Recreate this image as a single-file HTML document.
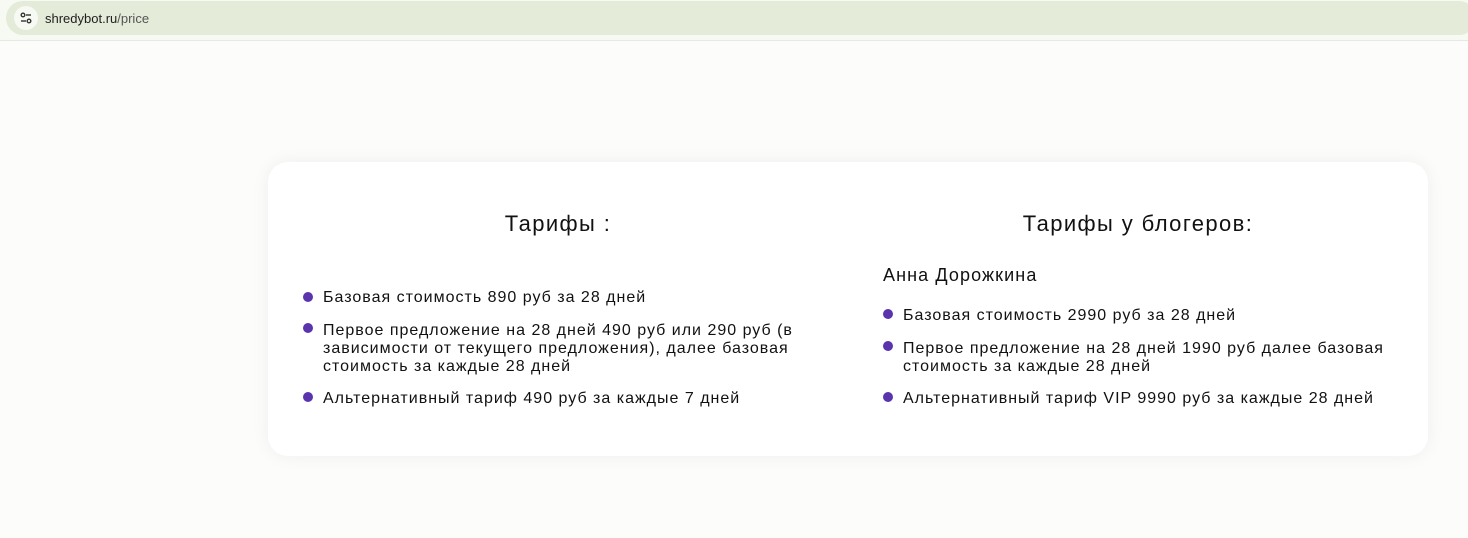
<!DOCTYPE html>
<html><head><meta charset="utf-8"><style>
*{margin:0;padding:0;box-sizing:border-box}
body{width:1468px;height:538px;background:#fcfdfb;font-family:"Liberation Sans",sans-serif;color:#111;position:relative;overflow:hidden}
.bar{position:absolute;left:0;top:0;width:1468px;height:41px;background:#f7f9f3;border-bottom:1px solid #e6e9e1}
.url{position:absolute;left:6px;top:1px;width:1470px;height:34px;border-radius:17px;background:#e4ebd9}
.ic{position:absolute;left:14px;top:6px;width:24px;height:24px;border-radius:12px;background:#f7f9f3}
.ut{position:absolute;left:45px;top:11px;font-size:13px;color:#1f1f1f}
.ut span{color:#555}
.card{position:absolute;left:268px;top:162px;width:1160px;height:294px;background:#fff;border-radius:20px;box-shadow:0 0 18px rgba(0,0,0,.06)}
.h{position:absolute;font-size:22px;text-align:center;width:580px;top:211px;letter-spacing:1.4px}
.t{position:absolute;font-size:16px;line-height:18px;letter-spacing:1px}
.b{position:absolute;width:10px;height:10px;border-radius:5px;background:#5a34ad}
</style></head><body>
<div class="bar"><div class="url"></div>
<div class="ic"><svg width="24" height="24" viewBox="0 0 24 24" fill="none" stroke="#333" stroke-width="1.4"><circle cx="9" cy="9" r="1.8"/><line x1="12" y1="9" x2="17" y2="9"/><line x1="7" y1="15" x2="12" y2="15"/><circle cx="15" cy="15" r="1.8"/></svg></div>
<div class="ut">shredybot.ru<span>/price</span></div></div>
<div class="card"></div>
<div class="h" style="left:268px">Тарифы :</div>
<div class="h" style="left:848px">Тарифы у блогеров:</div>
<div class="b" style="left:303px;top:292px"></div><div class="t" style="left:323px;top:289px">Базовая стоимость 890 руб за 28 дней</div>
<div class="b" style="left:303px;top:323px"></div><div class="t" style="left:323px;top:322px;width:530px">Первое предложение на 28 дней 490 руб или 290 руб (в зависимости от текущего предложения), далее базовая стоимость за каждые 28 дней</div>
<div class="b" style="left:303px;top:392px"></div><div class="t" style="left:323px;top:390px">Альтернативный тариф 490 руб за каждые 7 дней</div>
<div class="t" style="left:883px;top:266px;font-size:18px;letter-spacing:1.1px">Анна Дорожкина</div>
<div class="b" style="left:883px;top:309px"></div><div class="t" style="left:903px;top:307px">Базовая стоимость 2990 руб за 28 дней</div>
<div class="b" style="left:883px;top:341px"></div><div class="t" style="left:903px;top:340px;width:520px">Первое предложение на 28 дней 1990 руб далее базовая стоимость за каждые 28 дней</div>
<div class="b" style="left:883px;top:392px"></div><div class="t" style="left:903px;top:390px">Альтернативный тариф VIP 9990 руб за каждые 28 дней</div>
</body></html>
